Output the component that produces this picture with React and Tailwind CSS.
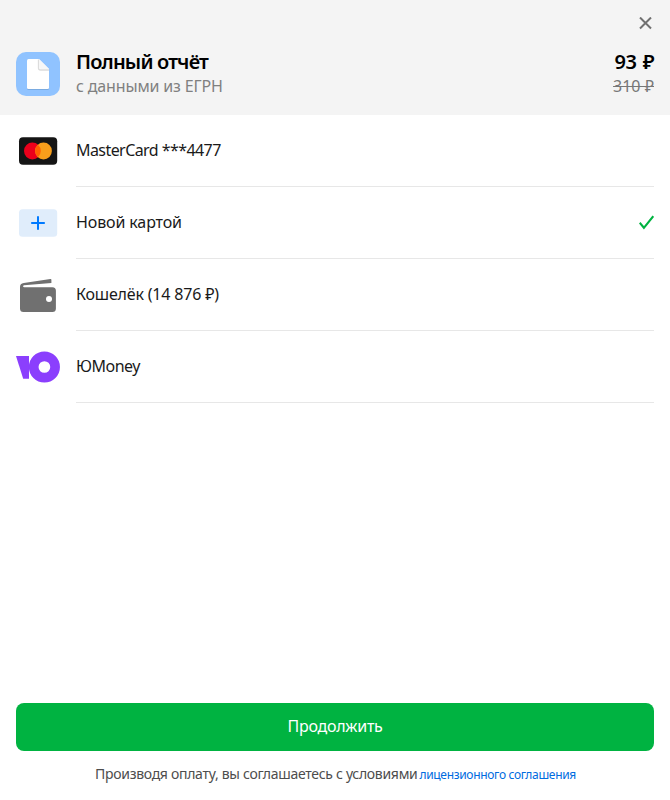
function DocumentIcon() {
  return (
    <svg className="size-11 shrink-0" viewBox="0 0 44 44">
      <defs><filter id="paper" x="-20%" y="-20%" width="140%" height="140%"><feDropShadow dx="0" dy=".6" stdDeviation=".7" floodColor="#456f9f" floodOpacity=".5" /></filter></defs>
      <rect width="44" height="44" rx="10" fill="#90c3ff" />
      <path d="M12.5 7H23l10 10v18.5a1.5 1.5 0 0 1-1.5 1.5h-19a1.5 1.5 0 0 1-1.5-1.5v-27A1.5 1.5 0 0 1 12.5 7Z" fill="white" filter="url(#paper)" />
      <path d="M22.5 7.5v8.5a2 2 0 0 0 2 2H33" fill="none" stroke="#dcdcdc" strokeWidth="1.3" />
      <path d="M23.2 7.2 33 17h-7.8a2 2 0 0 1-2-2Z" fill="#f7f7f7" />
    </svg>
  );
}

function MasterCardIcon() {
  return (
    <svg className="size-11 shrink-0" viewBox="0 0 44 44">
      <rect x="3" y="8.2" width="38.2" height="27.6" rx="4" fill="#151515" />
      <circle cx="16.4" cy="22" r="8.4" fill="#eb001b" />
      <circle cx="27.5" cy="22" r="8.4" fill="#f79e1b" />
      <path d="M21.95 15.7a8.4 8.4 0 0 1 0 12.6 8.4 8.4 0 0 1 0-12.6Z" fill="#ff5f00" />
    </svg>
  );
}

function NewCardIcon() {
  return (
    <svg className="size-11 shrink-0" viewBox="0 0 44 44">
      <rect x="3" y="8.2" width="38.2" height="27.6" rx="3.5" fill="#e0edfb" />
      <path d="M22 15.2v13.6M15.2 22h13.6" stroke="#007aff" strokeWidth="2" fill="none" />
    </svg>
  );
}

function WalletIcon() {
  return (
    <svg className="size-11 shrink-0" viewBox="0 0 44 44">
      <path fill="#707070" d="M4 14c0-2.6 1.1-3.7 3.8-4.1L34.4 5.9c.7-.1 1 .2 1 .8V10L8 12.3c-1.4.2-1.2 1.9.4 1.9h28a3.5 3.5 0 0 1 3.5 3.5v17.8a3.5 3.5 0 0 1-3.5 3.5H7.5A3.5 3.5 0 0 1 4 35.5V14Z" />
      <circle cx="33" cy="26" r="3" fill="white" />
    </svg>
  );
}

function YooMoneyIcon() {
  return (
    <svg className="size-11 shrink-0" viewBox="0 0 44 44">
      <path d="M0 11h13v22.8H7.2Z" fill="#8b3ffd" />
      <circle cx="28.4" cy="22" r="10.7" fill="none" stroke="#8b3ffd" strokeWidth="9.7" />
    </svg>
  );
}

function PaymentRow({ icon, children, selected = false }) {
  return (
    <li className="flex h-[72px] items-stretch gap-4">
      <div className="flex items-center">{icon}</div>
      <div className="flex flex-1 items-center justify-between border-b border-[#e7e7e7]">
        <div className="pb-0.5">{children}</div>
        {selected && <svg className="h-4 w-[15px]" viewBox="0 0 15 16"><path d="m.7 7.8 4.2 5L14.3 1.2" fill="none" stroke="#00b341" strokeWidth="2.1" /></svg>}
      </div>
    </li>
  );
}

export default function App() {
  return (
    <main className="flex h-[800px] w-[670px] flex-col overflow-hidden bg-white font-['Noto_Sans',sans-serif] text-base leading-6 text-[#1a1a1a]">
      <header className="h-[115px] bg-[#f4f4f4] px-4 pt-[17px]">
        <div className="flex h-[33px] justify-end">
          <button aria-label="Закрыть" className="mr-[2px] size-[13px]"><svg viewBox="0 0 13 13"><path d="m1 .5 11 11M12 .5 1 11.5" fill="none" stroke="#707070" strokeWidth="2" /></svg></button>
        </div>
        <div className="flex items-start gap-4">
          <div className="pt-0.5"><DocumentIcon /></div>
          <div className="flex-1 whitespace-nowrap">
            <h1 className="text-xl leading-6 font-semibold tracking-[-0.84px] text-black">Полный отчёт</h1>
            <p className="leading-6 tracking-[-0.15px] text-[#808080]">с данными из ЕГРН</p>
          </div>
          <div className="text-right whitespace-nowrap">
            <p className="text-xl leading-6 font-semibold tracking-[-0.5px] [word-spacing:1.5px] text-black">93 ₽</p>
            <p className="leading-6 text-[#777777] line-through">310 ₽</p>
          </div>
        </div>
      </header>
      <ul className="px-4 whitespace-nowrap">
        <PaymentRow icon={<MasterCardIcon />}><span className="tracking-[-0.57px]">MasterCard ***4477</span></PaymentRow>
        <PaymentRow icon={<NewCardIcon />} selected><span className="tracking-[-0.12px]">Новой картой</span></PaymentRow>
        <PaymentRow icon={<WalletIcon />}><span className="tracking-[-0.18px]">Кошелёк (14 876 ₽)</span></PaymentRow>
        <PaymentRow icon={<YooMoneyIcon />}><span className="tracking-[-0.5px]">ЮMoney</span></PaymentRow>
      </ul>
      <footer className="mt-auto px-4 pb-[14px]">
        <button className="flex h-12 w-full items-center justify-center rounded-lg bg-[#00b341] pb-0.5 tracking-[-0.25px] text-white">Продолжить</button>
        <p className="mt-[11px] flex items-baseline justify-center gap-0.5 pl-px text-sm leading-6 whitespace-nowrap text-[#4d4d4d]">
          <span className="tracking-[-0.3px]">Производя оплату, вы соглашаетесь с условиями</span>
          <a className="text-xs tracking-[-0.32px] text-[#006be0]">лицензионного соглашения</a>
        </p>
      </footer>
    </main>
  );
}
